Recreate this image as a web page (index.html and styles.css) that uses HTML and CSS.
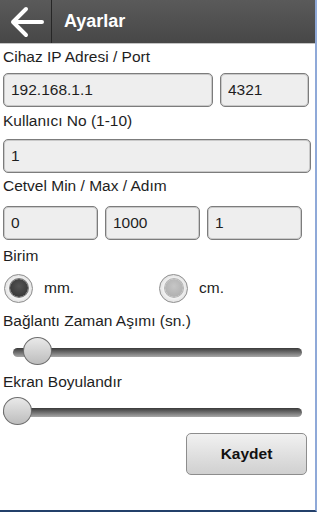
FILE: index.html
```html
<!doctype html>
<html>
    <head>
        <meta charset="utf-8">
        <link rel="stylesheet" href="styles.css">
    </head>
    <body>
        <div class="screen">
            <header class="bar">
                <button class="back" type="button" aria-label="Geri">
                    <svg width="36" height="32" viewBox="0 0 36 32">
                        <path d="M4 16 H33 M17 3 L4 16 L17 29" fill="none" stroke="#fff" stroke-width="4" stroke-linecap="round" stroke-linejoin="round" />
                    </svg>
                </button>
                <h1 class="title">Ayarlar</h1>
            </header>

            <form class="settings">
                <label class="caption cap-ip" for="ip">Cihaz IP Adresi / Port</label>
                <div class="row row-ip">
                    <input class="field ip" id="ip" type="text" value="192.168.1.1" />
                    <input class="field port" id="port" type="text" value="4321" />
                </div>

                <label class="caption cap-user" for="user">Kullanıcı No (1-10)</label>
                <div class="row row-user">
                    <input class="field user" id="user" type="text" value="1" />
                </div>

                <label class="caption cap-ruler" for="min">Cetvel Min / Max / Adım</label>
                <div class="row row-ruler">
                    <input class="field third" id="min" type="text" value="0" />
                    <input class="field third" id="max" type="text" value="1000" />
                    <input class="field third" id="step" type="text" value="1" />
                </div>

                <div class="caption cap-unit">Birim</div>
                <div class="radios">
                    <label class="radio radio-mm">
                        <span class="dot on"></span>
                        <span>mm.</span>
                    </label>
                    <label class="radio">
                        <span class="dot"></span>
                        <span>cm.</span>
                    </label>
                </div>

                <div class="caption cap-timeout">Bağlantı Zaman Aşımı (sn.)</div>
                <div class="slider slider-timeout">
                    <div class="track"></div>
                    <div class="thumb" style="left: 10px"></div>
                </div>

                <div class="caption cap-screen">Ekran Boyulandır</div>
                <div class="slider slider-screen">
                    <div class="track"></div>
                    <div class="thumb" style="left: 0px"></div>
                </div>

                <div class="actions">
                    <button class="save" type="button">Kaydet</button>
                </div>
            </form>
        </div>
    </body>
</html>
```

FILE: styles.css
```css
html {
    margin: 0;
    width: 100%;
    height: 100%;
}
body {
    margin: 0;
    padding: 0;
    background: #fff;
    font-family: "Liberation Sans", Arial, sans-serif;
    color: #1e1e1e;
}
.screen {
    box-sizing: border-box;
    width: 317px;
    height: 512px;
    border-right: 2px solid #8fa9d8;
    border-bottom: 2px solid #23406a;
    overflow: hidden;
}

/* top bar */
.bar {
    display: flex;
    align-items: center;
    height: 43px;
    background: linear-gradient(#5a5a5a, #474747);
    border-bottom: 1px solid #c4c4c4;
}
.back {
    display: flex;
    align-items: center;
    justify-content: center;
    width: 52px;
    height: 43px;
    padding: 0 0 0 2px;
    background: none;
    border: none;
    border-right: 1px solid #262626;
}
.title {
    margin: 0 0 0 12px;
    font-size: 18px;
    font-weight: bold;
    color: #fff;
}

/* form */
.settings {
    display: flex;
    flex-direction: column;
    padding: 0 0 0 3px;
    margin: 0;
}
.caption {
    display: block;
    height: 18px;
    line-height: 18px;
    font-size: 15.5px;
    white-space: nowrap;
}
.cap-ip { margin-top: 4px; }
.cap-user { margin-top: 5px; }
.cap-ruler { margin-top: 4px; }
.cap-unit { margin-top: 7px; }
.cap-timeout { margin-top: 9px; }
.cap-screen { margin-top: 8px; }

.row {
    display: flex;
    gap: 7px;
}
.row-ip { margin-top: 7px; }
.row-user { margin-top: 9px; }
.row-ruler { margin-top: 11px; }

.field {
    box-sizing: border-box;
    height: 34px;
    margin: 0;
    padding: 0 0 0 7px;
    border: 1px solid #7c7c7c;
    border-radius: 5px;
    background: #eeeeee;
    box-shadow: inset 0 0 0 1px #c9c9c9;
    font-family: inherit;
    font-size: 15.5px;
    color: #1e1e1e;
}
.ip { width: 210px; }
.port { width: 89px; }
.user { width: 308px; }
.third { width: 95px; }

/* radios */
.radios {
    display: flex;
    height: 30px;
    margin-top: 8px;
}
.radio {
    display: flex;
    align-items: center;
    gap: 11px;
    font-size: 15.5px;
}
.radio-mm {
    width: 155px;
    padding-left: 1px;
}
.dot {
    box-sizing: border-box;
    display: flex;
    align-items: center;
    justify-content: center;
    width: 29px;
    height: 29px;
    border: 1px solid #8e8e8e;
    border-radius: 50%;
    background: radial-gradient(circle, #fbfbfb 40%, #cdcdcd 100%);
}
.dot::after {
    content: "";
    width: 18px;
    height: 18px;
    border-radius: 50%;
    background: radial-gradient(circle at 50% 40%, #c6c6c6, #a9a9a9);
    box-shadow: 0 0 0 1px #b3b3b3;
}
.dot.on::after {
    background: radial-gradient(circle at 50% 40%, #555, #2e2e2e);
    box-shadow: 0 0 0 1px #777;
}

/* sliders */
.slider {
    position: relative;
    display: flex;
    align-items: center;
    height: 28px;
    width: 299px;
}
.slider-timeout {
    margin-top: 7px;
    margin-left: 10px;
    width: 289px;
}
.slider-screen {
    margin-top: 6px;
}
.track {
    flex: 1;
    height: 9px;
    margin-top: 2px;
    border-radius: 5px;
    background: linear-gradient(#3a3a3a, #6a6a6a 45%, #a8a8a8);
}
.thumb {
    position: absolute;
    top: 0;
    box-sizing: border-box;
    width: 29px;
    height: 28px;
    border: 1px solid #6e6e6e;
    border-radius: 50%;
    background: linear-gradient(#e9e9e9, #bdbdbd);
}

/* save */
.actions {
    display: flex;
    justify-content: flex-end;
    margin-top: 8px;
    padding-right: 8px;
}
.save {
    width: 121px;
    height: 42px;
    border: 1px solid #8d8d8d;
    border-radius: 5px;
    background: linear-gradient(#f1f1f1, #d0d0d0);
    font-family: inherit;
    font-size: 15.5px;
    font-weight: bold;
    color: #111;
}
```
